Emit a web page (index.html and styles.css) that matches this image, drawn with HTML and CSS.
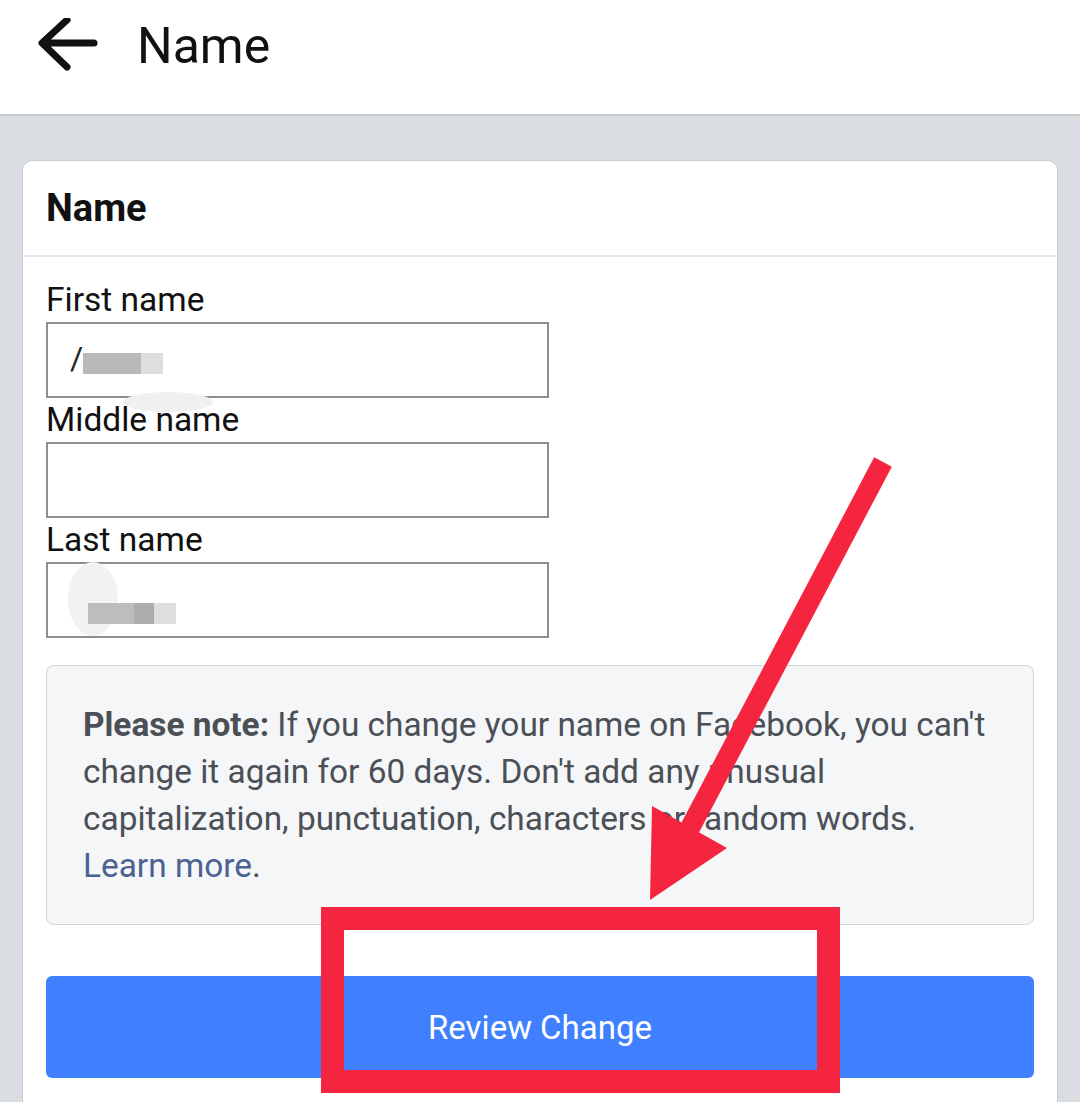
FILE: index.html
```html
<!DOCTYPE html>
<html lang="en">
<head>
    <meta charset="UTF-8">
    <meta name="viewport" content="width=device-width, initial-scale=1.0">
    <title>Name</title>
    <link rel="stylesheet" href="styles.css">
</head>
<body>

    <header class="topbar">
        <svg class="back" width="62" height="56" viewBox="0 0 62 56">
            <path d="M57 25 H6 M30 2 L5 25 L30 49" fill="none" stroke="#111" stroke-width="7" stroke-linecap="round" stroke-linejoin="round"/>
        </svg>
        <span class="title">Name</span>
    </header>

    <main class="page">
        <section class="card">
            <div class="card-head">Name</div>
            <div class="card-body">
                <label class="label">First name</label>
                <div class="field">
                    <span class="typed">/</span><span class="blur dark"></span><span class="blur light"></span>
                    <span class="smudge smudge-first"></span>
                </div>

                <label class="label">Middle name</label>
                <div class="field"></div>

                <label class="label">Last name</label>
                <div class="field">
                    <span class="smudge smudge-last"></span>
                    <span class="blur dark long"></span><span class="blur light short"></span>
                </div>

                <div class="note">
                    <b>Please note:</b> If you change your name on Facebook, you can't change it again for 60 days. Don't add any unusual capitalization, punctuation, characters or random words.
                    <a href="#" class="learn">Learn more</a>.
                </div>

                <button class="review">Review Change</button>
            </div>
        </section>
    </main>

    <!-- annotation drawn on top of the screenshot -->
    <svg class="markup" width="1080" height="1102" viewBox="0 0 1080 1102">
        <line x1="883" y1="462" x2="690" y2="828" stroke="#f5243f" stroke-width="20"/>
        <polygon points="650,900 652,806 727,848" fill="#f5243f"/>
        <rect x="332.5" y="918.5" width="496" height="163" fill="none" stroke="#f5243f" stroke-width="23"/>
    </svg>

</body>
</html>
```

FILE: styles.css
```css
body {
    margin: 0;
    font-family: Roboto, "Noto Sans", Arial, sans-serif;
    background-color: #dadde2;
    position: relative;
    overflow: hidden;
    height: 1102px;
}
.topbar {
    display: flex;
    align-items: center;
    height: 92px;
    padding: 0 0 22px 37px;
    background-color: #fff;
    border-bottom: 2px solid #c9ccd1;
}
.back {
    display: block;
}
.title {
    margin-left: 38px;
    font-size: 50px;
    color: #111;
}
.page {
    padding: 44px 22px 0 22px;
}
.card {
    background-color: #fff;
    border: 1px solid #c8ccd2;
    border-bottom: none;
    border-radius: 10px 10px 0 0;
    height: 941px;
}
.card-head {
    height: 94px;
    display: flex;
    align-items: center;
    padding-left: 23px;
    font-size: 38px;
    font-weight: bold;
    color: #111;
    border-bottom: 2px solid #e5e7ea;
}
.card-body {
    padding: 23px 23px 0 23px;
}
.label {
    display: block;
    height: 40px;
    line-height: 40px;
    font-size: 33.5px;
    color: #111;
    margin-bottom: 2px;
}
.field {
    position: relative;
    width: 477px;
    height: 72px;
    border: 2px solid #8f8f8f;
    margin-bottom: 2px;
    display: flex;
    align-items: center;
    padding-left: 22px;
}
.typed {
    font-size: 32px;
    color: #222;
    margin-top: -4px;
}
.blur {
    position: relative;
    display: inline-block;
    height: 21px;
    margin-top: 6px;
}
.blur.dark {
    width: 58px;
    background-color: #b9b9b9;
}
.blur.light {
    width: 22px;
    background-color: #dedede;
}
.blur.long {
    width: 66px;
    margin-top: 26px;
    margin-left: 18px;
    background: linear-gradient(to right, #bdbdbd 70%, #adadad 70%);
}
.blur.short {
    width: 22px;
    margin-top: 26px;
}
.smudge {
    position: absolute;
    border-radius: 50%;
}
.smudge-first {
    left: 75px;
    top: 68px;
    width: 90px;
    height: 20px;
    background-color: #f0f0f0;
}
.smudge-last {
    left: 20px;
    top: -2px;
    width: 50px;
    height: 74px;
    background-color: #f2f2f2;
}
.note {
    margin-top: 27px;
    padding: 35px 36px;
    background-color: #f5f6f7;
    border: 1px solid #cfd2d6;
    border-radius: 8px;
    font-size: 33.4px;
    line-height: 47px;
    color: #4b4f56;
}
.note b {
    color: #4b4f56;
}
.learn {
    color: #4b6393;
    text-decoration: none;
}
.review {
    display: block;
    width: 100%;
    height: 102px;
    margin-top: 51px;
    border: none;
    border-radius: 6px;
    background-color: #4080ff;
    color: #fff;
    font-family: Roboto, "Noto Sans", Arial, sans-serif;
    font-size: 33px;
}
.markup {
    position: absolute;
    top: 0;
    left: 0;
    pointer-events: none;
}
```
